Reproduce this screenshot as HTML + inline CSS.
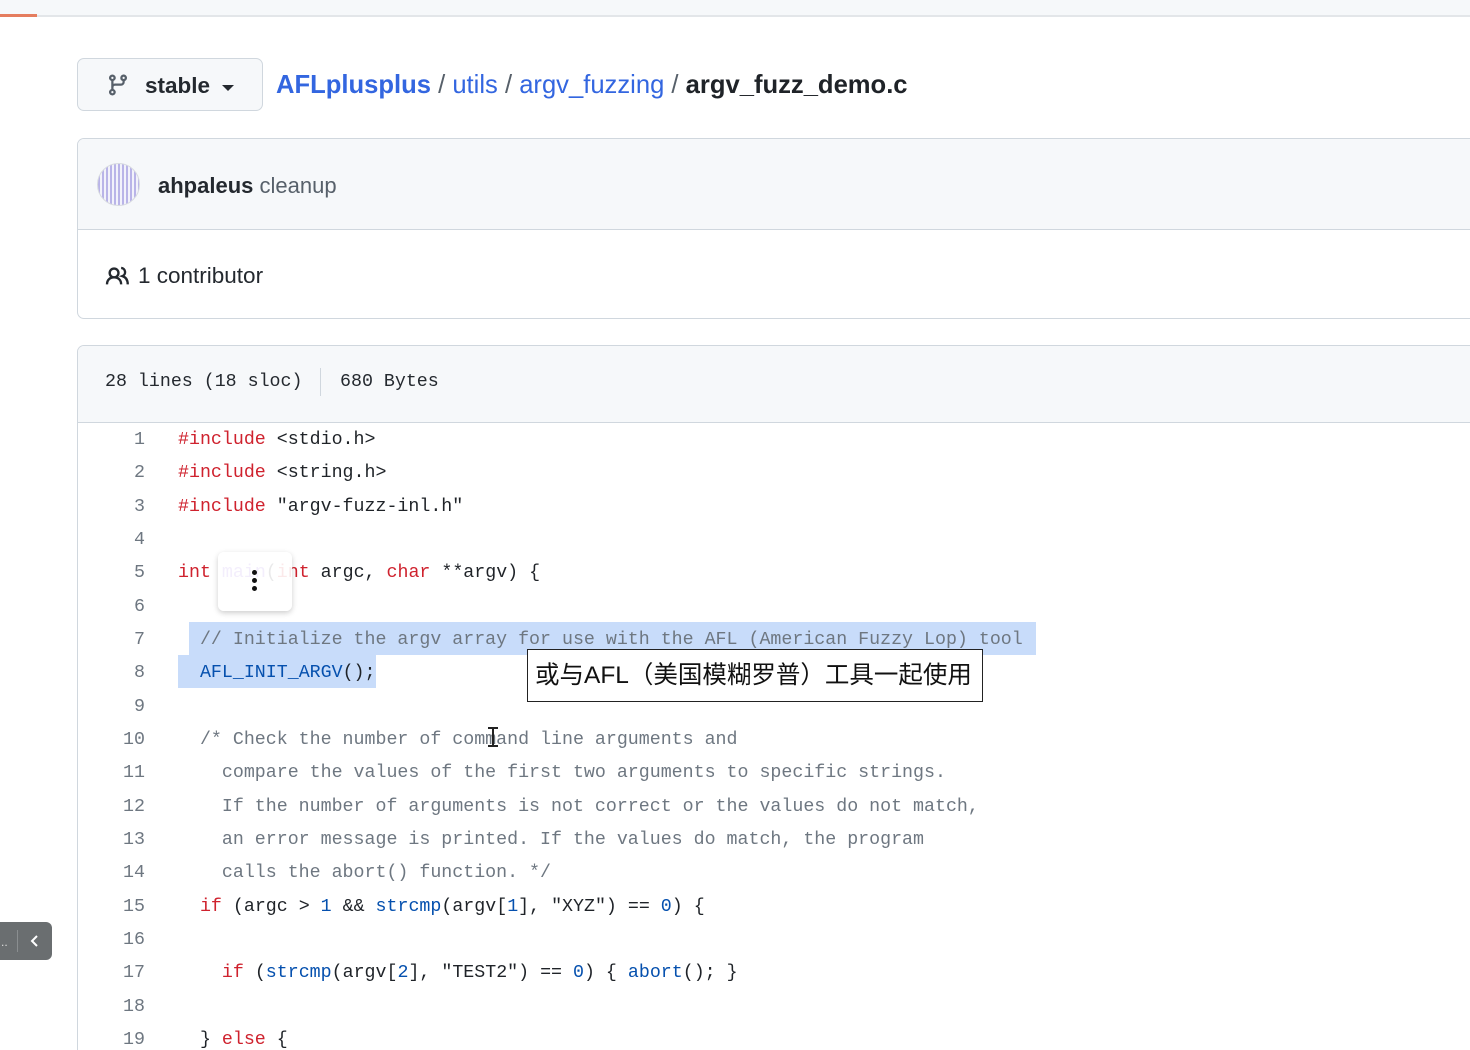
<!DOCTYPE html>
<html style="overflow:hidden;height:1050px"><head><meta charset="utf-8">
<style>
*{margin:0;padding:0;box-sizing:border-box}
body{width:1470px;height:1050px;overflow:hidden;background:#fff;font-family:"Liberation Sans","Noto Sans CJK SC",sans-serif;color:#1f2328;position:relative}
.abs{position:absolute}
.mono{font-family:"Liberation Mono","DejaVu Sans Mono",monospace;font-size:18.3px}
.code{position:absolute;left:0;top:425px;width:1470px}
.ln{position:absolute;left:90px;width:55px;text-align:right;color:#6e7781}
.tx{position:absolute;left:178px;white-space:pre;color:#1f2328}
.k{color:#cf222e}.c{color:#6e7781}.b{color:#0550ae}
</style></head><body>
<div class="abs" style="left:0;top:0;width:1470px;height:17px;background:#f6f8fa;border-bottom:2px solid #e3e6e9"></div>
<div class="abs" style="left:0;top:14px;width:37px;height:3px;background:#e57d5f"></div>

<div class="abs" style="left:77px;top:58px;width:186px;height:53px;background:#f6f8fa;border:1px solid #d0d7de;border-radius:7px"></div>
<svg class="abs" style="left:106px;top:73px" width="24" height="24" viewBox="0 0 16 16"><path fill="#57606a" d="M9.5 3.25a2.25 2.25 0 1 1 3 2.122V6A2.5 2.5 0 0 1 10 8.5H6a1 1 0 0 0-1 1v1.128a2.251 2.251 0 1 1-1.5 0V5.372a2.25 2.25 0 1 1 1.5 0v1.836A2.493 2.493 0 0 1 6 7h4a1 1 0 0 0 1-1v-.628A2.25 2.25 0 0 1 9.5 3.25Zm-6 0a.75.75 0 1 0 1.5 0 .75.75 0 0 0-1.5 0Zm8.25-.75a.75.75 0 1 0 0 1.5.75.75 0 0 0 0-1.5ZM4.25 12a.75.75 0 1 0 0 1.5.75.75 0 0 0 0-1.5Z"/></svg>
<div class="abs" style="left:145px;top:73px;font-size:22.5px;font-weight:bold;color:#24292f">stable</div>
<div class="abs" style="left:222px;top:85px;width:0;height:0;border-left:6px solid transparent;border-right:6px solid transparent;border-top:6px solid #24292f"></div>
<div class="abs" style="left:276px;top:71px;font-size:25.6px;white-space:pre;color:#57606a"><span style="color:#3366e0;font-weight:bold">AFLplusplus</span> / <span style="color:#3366e0">utils</span> / <span style="color:#3366e0">argv_fuzzing</span> / <span style="color:#1f2328;font-weight:bold">argv_fuzz_demo.c</span></div>

<div class="abs" style="left:77px;top:138px;width:1420px;height:181px;border:1px solid #d0d7de;border-radius:7px;overflow:hidden">
 <div style="height:91px;background:#f6f8fa;border-bottom:1px solid #d0d7de"></div>
</div>
<div class="abs" style="left:97px;top:163px;width:43px;height:43px;border-radius:50%;border:1px solid #d8dbe0;background:repeating-linear-gradient(90deg,#b9b4e8 0 2px,#f2f2fb 2px 4px),#eee"></div>
<div class="abs" style="left:158px;top:173px;font-size:22px;white-space:pre"><b style="color:#24292f">ahpaleus</b> <span style="color:#57606a">cleanup</span></div>
<svg class="abs" style="left:105px;top:264px" width="26" height="22" viewBox="0 0 16 14"><path fill="none" stroke="#24292f" stroke-width="1.5" d="M1 13c0-3 2-4.5 4.5-4.5S10 10 10 13M5.5 8.5a2.8 2.8 0 1 0 0-5.6 2.8 2.8 0 0 0 0 5.6M10 2.5a2.7 2.7 0 0 1 .8 5.2c2 .6 3.4 2.3 3.4 5.3"/></svg>
<div class="abs" style="left:138px;top:263px;font-size:22.5px;color:#24292f">1 contributor</div>

<div class="abs" style="left:77px;top:345px;width:1420px;height:720px;border:1px solid #d0d7de;border-radius:7px;overflow:hidden">
 <div style="height:77px;background:#f6f8fa;border-bottom:1px solid #d0d7de"></div>
</div>
<div class="abs mono" style="left:105px;top:372px;white-space:pre;color:#24292f">28 lines (18 sloc)</div>
<div class="abs" style="left:320px;top:368px;width:1px;height:28px;background:#d0d7de"></div>
<div class="abs mono" style="left:340px;top:372px;white-space:pre;color:#24292f">680 Bytes</div>

<div class="abs" style="left:189px;top:622px;width:847px;height:33px;background:#c8dcfa"></div>
<div class="abs" style="left:178px;top:655px;width:198px;height:33px;background:#c8dcfa"></div>

<div class="code mono">
<div class="ln" style="top:5px">1</div><div class="tx" style="top:5px"><span class="k">#include</span> &lt;stdio.h&gt;</div>
<div class="ln" style="top:38px">2</div><div class="tx" style="top:38px"><span class="k">#include</span> &lt;string.h&gt;</div>
<div class="ln" style="top:72px">3</div><div class="tx" style="top:72px"><span class="k">#include</span> "argv-fuzz-inl.h"</div>
<div class="ln" style="top:105px">4</div>
<div class="ln" style="top:138px">5</div><div class="tx" style="top:138px"><span class="k">int</span> <span style="color:#8250df">main</span>(<span class="k">int</span> argc, <span class="k">char</span> **argv) {</div>
<div class="ln" style="top:172px">6</div>
<div class="ln" style="top:205px">7</div><div class="tx c" style="top:205px">  // Initialize the argv array for use with the AFL (American Fuzzy Lop) tool</div>
<div class="ln" style="top:238px">8</div><div class="tx" style="top:238px">  <span class="b">AFL_INIT_ARGV</span>();</div>
<div class="ln" style="top:272px">9</div>
<div class="ln" style="top:305px">10</div><div class="tx c" style="top:305px">  /* Check the number of command line arguments and</div>
<div class="ln" style="top:338px">11</div><div class="tx c" style="top:338px">    compare the values of the first two arguments to specific strings.</div>
<div class="ln" style="top:372px">12</div><div class="tx c" style="top:372px">    If the number of arguments is not correct or the values do not match,</div>
<div class="ln" style="top:405px">13</div><div class="tx c" style="top:405px">    an error message is printed. If the values do match, the program</div>
<div class="ln" style="top:438px">14</div><div class="tx c" style="top:438px">    calls the abort() function. */</div>
<div class="ln" style="top:472px">15</div><div class="tx" style="top:472px">  <span class="k">if</span> (argc &gt; <span class="b">1</span> &amp;&amp; <span class="b">strcmp</span>(argv[<span class="b">1</span>], "XYZ") == <span class="b">0</span>) {</div>
<div class="ln" style="top:505px">16</div>
<div class="ln" style="top:538px">17</div><div class="tx" style="top:538px">    <span class="k">if</span> (<span class="b">strcmp</span>(argv[<span class="b">2</span>], "TEST2") == <span class="b">0</span>) { <span class="b">abort</span>(); }</div>
<div class="ln" style="top:572px">18</div>
<div class="ln" style="top:605px">19</div><div class="tx" style="top:605px">  } <span class="k">else</span> {</div>
</div>

<div class="abs" style="left:218px;top:552px;width:74px;height:59px;background:rgba(255,255,255,0.9);border-radius:6px;box-shadow:0 2px 6px rgba(0,0,0,0.2)"></div>
<div class="abs" style="left:252px;top:570px;width:5px;height:5px;border-radius:50%;background:#111;box-shadow:0 8px 0 #111,0 16px 0 #111"></div>

<div class="abs" style="left:527px;top:649px;width:456px;height:53px;background:#fff;border:1.5px solid #222;font-size:24.5px;line-height:52px;padding-left:7px;color:#111;white-space:nowrap;overflow:hidden">或与AFL（美国模糊罗普）工具一起使用</div>

<div class="abs" style="left:492px;top:727px;width:2px;height:20px;background:#222"></div>
<div class="abs" style="left:488px;top:727px;width:10px;height:2px;background:#222"></div>
<div class="abs" style="left:488px;top:745px;width:10px;height:2px;background:#222"></div>

<div class="abs" style="left:0;top:922px;width:52px;height:38px;background:#6a6e70;border-radius:0 6px 6px 0"></div>
<div class="abs" style="left:17px;top:930px;width:1px;height:22px;background:#8a8e90"></div>
<div class="abs" style="left:1px;top:935px;color:#ddd;font-size:12px">..</div>
<svg class="abs" style="left:29px;top:933px" width="12" height="16" viewBox="0 0 12 16"><path d="M8 3 3 8l5 5" fill="none" stroke="#fff" stroke-width="2"/></svg>
</body></html>
